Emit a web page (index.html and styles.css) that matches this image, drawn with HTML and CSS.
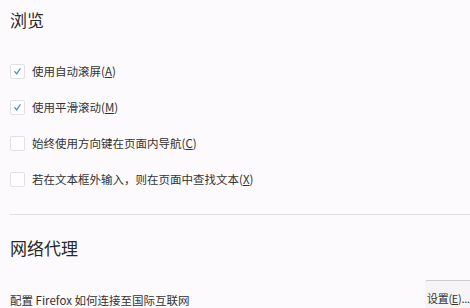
FILE: index.html
```html
<!DOCTYPE html>
<html lang="zh-CN">
<head>
<meta charset="utf-8">
<title>浏览</title>
<link rel="stylesheet" href="styles.css">
</head>
<body>
<div class="page">
  <section class="group">
    <h2 class="heading">浏览</h2>
    <ul class="options">
      <li class="option">
        <span class="box checked"><svg viewBox="0 0 16 16" width="15" height="15"><path d="M4.6 8.2 L7 11 L11.2 4.6" fill="none" stroke="#3d8fdc" stroke-width="1.6" stroke-linecap="round" stroke-linejoin="round"/></svg></span>
        <span class="label">使用自动滚屏(<u>A</u>)</span>
      </li>
      <li class="option">
        <span class="box checked"><svg viewBox="0 0 16 16" width="15" height="15"><path d="M4.6 8.2 L7 11 L11.2 4.6" fill="none" stroke="#3d8fdc" stroke-width="1.6" stroke-linecap="round" stroke-linejoin="round"/></svg></span>
        <span class="label">使用平滑滚动(<u>M</u>)</span>
      </li>
      <li class="option">
        <span class="box"></span>
        <span class="label">始终使用方向键在页面内导航(<u>C</u>)</span>
      </li>
      <li class="option">
        <span class="box"></span>
        <span class="label">若在文本框外输入，则在页面中查找文本(<u>X</u>)</span>
      </li>
    </ul>
  </section>
  <hr class="divider">
  <section class="group">
    <h2 class="heading">网络代理</h2>
    <div class="proxy-row">
      <span class="desc">配置 Firefox 如何连接至国际互联网</span>
      <button class="btn" type="button">设置(<u>E</u>)...</button>
    </div>
  </section>
</div>
</body>
</html>
```
FILE: styles.css
```css
html, body {
  margin: 0;
  padding: 0;
  background: #fcfafc;
  overflow: hidden;
}
body {
  font-family: "Noto Sans CJK SC", "Noto Sans", sans-serif;
  color: #333333;
}
.page {
  width: 480px;
  padding-left: 10px;
  display: flex;
  flex-direction: column;
}
.group {
  display: flex;
  flex-direction: column;
}
.heading {
  margin: 0;
  font-size: 17px;
  font-weight: normal;
  line-height: 24px;
  color: #2a2a2a;
}
.group:first-child .heading {
  margin-top: 8px;
}
.options {
  list-style: none;
  margin: 21px 0 0 0;
  padding: 0;
  display: flex;
  flex-direction: column;
}
.option {
  height: 36px;
  display: flex;
  align-items: center;
  font-size: 11.5px;
  line-height: 16px;
}
.box {
  width: 15px;
  height: 15px;
  box-sizing: border-box;
  border: 1px solid #e3e0e3;
  border-radius: 2px;
  background: #ffffff;
  margin-right: 7px;
  display: flex;
  align-items: center;
  justify-content: center;
  flex: none;
}
.box svg {
  display: block;
}
.label u, .btn u {
  text-decoration: underline;
  text-underline-offset: 1px;
}
.divider {
  border: none;
  border-top: 1px solid #e2dfe2;
  margin: 17px 0 0 0;
  height: 0;
}
.divider + .group .heading {
  margin-top: 21px;
}
.proxy-row {
  margin-top: 20px;
  display: flex;
  justify-content: space-between;
  align-items: flex-start;
  font-size: 11.5px;
  line-height: 16px;
}
.desc {
  margin-top: 12px;
}
.btn {
  width: 65px;
  padding: 9px 0 10px 2px;
  margin: 0;
  box-sizing: border-box;
  text-align: left;
  font-family: inherit;
  font-size: 11px;
  letter-spacing: -0.3px;
  line-height: 16px;
  color: #333333;
  background: #f6f4f6;
  border: none;
  border-top: 1px solid #cfcccf;
  border-radius: 2px 2px 0 0;
  white-space: nowrap;
}
```
